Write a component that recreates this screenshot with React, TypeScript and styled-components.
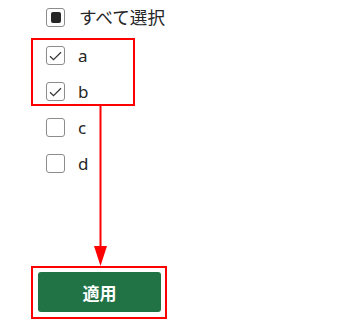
import React from "react";
import styled, { createGlobalStyle } from "styled-components";

const GlobalStyle = createGlobalStyle`
  html, body {
    margin: 0;
    padding: 0;
    background: #ffffff;
  }
  body {
    font-family: "Noto Sans", "Noto Sans CJK JP", sans-serif;
  }
`;

const Page = styled.div`
  position: relative;
  width: 341px;
  height: 321px;
  overflow: hidden;
  background: #ffffff;
`;

const List = styled.ul`
  list-style: none;
  margin: 0;
  padding: 8px 0 0 46px;
  display: flex;
  flex-direction: column;
  gap: 17px;
`;

const Row = styled.li<{ $extra?: number }>`
  display: flex;
  align-items: center;
  gap: 13px;
  height: 19px;
  margin-bottom: ${(p) => p.$extra ?? 0}px;
  color: #262626;
  font-size: 17px;
`;

const Box = styled.span`
  box-sizing: border-box;
  width: 19px;
  height: 19px;
  border: 1px solid #8c8c8c;
  border-radius: 3px;
  background: #ffffff;
  display: flex;
  align-items: center;
  justify-content: center;
  flex: none;
`;

const Mixed = styled.span`
  width: 10px;
  height: 11px;
  border-radius: 2px;
  background: #262626;
`;

const Label = styled.span<{ $cjk?: boolean }>`
  line-height: 19px;
  font-size: ${(p) => (p.$cjk ? 17.6 : 17)}px;
  margin-left: ${(p) => (p.$cjk ? 1 : 0)}px;
`;

const ApplyButton = styled.button`
  position: absolute;
  left: 38px;
  top: 272px;
  width: 123px;
  height: 40px;
  border: none;
  border-radius: 3px;
  background: #217346;
  color: #ffffff;
  font-family: "Noto Sans CJK JP", "Noto Sans", sans-serif;
  font-weight: 700;
  font-size: 17px;
  padding: 0;
`;

const Frame = styled.div<{ $x: number; $y: number; $w: number; $h: number }>`
  position: absolute;
  left: ${(p) => p.$x}px;
  top: ${(p) => p.$y}px;
  width: ${(p) => p.$w}px;
  height: ${(p) => p.$h}px;
  box-sizing: border-box;
  border: 2px solid #ff0000;
  pointer-events: none;
`;

const Arrow = styled.svg`
  position: absolute;
  left: 90px;
  top: 104px;
`;

function Check() {
  return (
    <svg width="13" height="10" viewBox="0 0 13 10">
      <path d="M1 5.2 L4.5 8.6 L12 1.2" fill="none" stroke="#333" strokeWidth="1.2" />
    </svg>
  );
}

const items = [
  { label: "a", checked: true },
  { label: "b", checked: true },
  { label: "c", checked: false },
  { label: "d", checked: false },
];

export default function App() {
  return (
    <Page>
      <GlobalStyle />
      <List>
        <Row $extra={2}>
          <Box>
            <Mixed />
          </Box>
          <Label $cjk>すべて選択</Label>
        </Row>
        {items.map((it) => (
          <Row key={it.label}>
            <Box>{it.checked && <Check />}</Box>
            <Label>{it.label}</Label>
          </Row>
        ))}
      </List>
      <Frame $x={31} $y={38} $w={104} $h={68} />
      <Arrow width="22" height="164" viewBox="0 0 22 164">
        <line x1="10.5" y1="0" x2="10.5" y2="144" stroke="#ff0000" strokeWidth="2" />
        <polygon points="4,142 17,142 10.5,162" fill="#ff0000" />
      </Arrow>
      <Frame $x={31} $y={266} $w={136} $h={53} />
      <ApplyButton>適用</ApplyButton>
    </Page>
  );
}
